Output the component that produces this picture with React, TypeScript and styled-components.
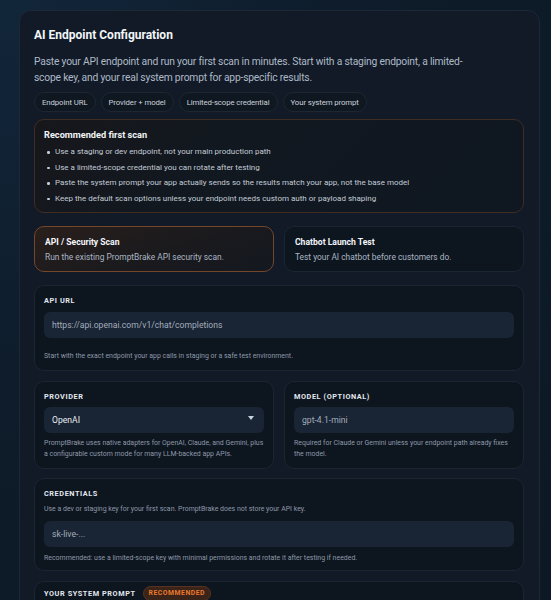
import React from "react";
import styled, { createGlobalStyle } from "styled-components";

const Global = createGlobalStyle`
  html, body { margin: 0; padding: 0; }
  body {
    background: radial-gradient(ellipse at 0% 0%, #12263a 0%, #0e1c2b 45%, #0c1824 100%);
    min-height: 600px;
    font-family: Roboto, "Liberation Sans", sans-serif;
    -webkit-font-smoothing: antialiased;
  }
`;

const Page = styled.div`
  padding: 10px 11px 0 19px;
  height: 600px;
  overflow: hidden;
  box-sizing: border-box;
`;

const Card = styled.section`
  background: #111a26;
  border: 1px solid #1d2835;
  border-radius: 12px;
  padding: 15px 15px 20px 14px;
  display: flex;
  flex-direction: column;
`;

const Title = styled.h1`
  margin: 0;
  font-size: 12px;
  line-height: 18px;
  font-weight: 700;
  color: #f3f6fa;
`;

const Desc = styled.p`
  margin: 10px 0 0;
  max-width: 440px;
  font-size: 10.3px;
  letter-spacing: -0.2px;
  line-height: 16px;
  color: #aeb9c7;
`;

const Chips = styled.div`
  display: flex;
  gap: 5px;
  margin-top: 6px;
`;

const Chip = styled.span`
  height: 18px;
  padding: 0 7px;
  display: inline-flex;
  align-items: center;
  border: 1px solid #1d2734;
  background: #0f1721;
  border-radius: 999px;
  font-size: 7.8px;
  letter-spacing: -0.1px;
  color: #c9d1da;
`;

const RecBox = styled.div`
  margin-top: 7px;
  border: 1px solid #402d22;
  border-radius: 10px;
  background: linear-gradient(135deg, #17171b 0%, #111820 40%, #0f1721 100%);
  padding: 8px 12px 6px 9px;
`;

const RecTitle = styled.div`
  font-size: 9.2px;
  line-height: 14px;
  font-weight: 700;
  color: #f1f4f8;
  margin-bottom: 2px;
`;

const Bullets = styled.ul`
  list-style: none;
  margin: 0;
  padding: 0;
`;

const Bullet = styled.li`
  position: relative;
  padding-left: 11px;
  font-size: 8px;
  line-height: 15.5px;
  color: #c3ccd7;
  &::before {
    content: "";
    position: absolute;
    left: 3px;
    top: 7px;
    width: 2.5px;
    height: 2.5px;
    border-radius: 50%;
    background: #c3ccd7;
  }
`;

const ModeRow = styled.div`
  display: grid;
  grid-template-columns: 1fr 1fr;
  gap: 10px;
  margin-top: 13px;
`;

const ModeCard = styled.div<{ $active?: boolean }>`
  border: 1px solid ${(p) => (p.$active ? "#74462a" : "#1b2633")};
  border-radius: 10px;
  background: ${(p) =>
    p.$active
      ? "linear-gradient(160deg, #2a1f1c 0%, #1b1a1d 50%, #141820 100%)"
      : "#0d151f"};
  padding: 9px 10px 7px;
`;

const ModeTitle = styled.div`
  font-size: 8.6px;
  line-height: 13px;
  font-weight: 700;
  color: #f3f6fa;
`;

const ModeSub = styled.div`
  margin-top: 1px;
  font-size: 8.4px;
  line-height: 14px;
  color: #aab5c2;
`;

const Panel = styled.div<{ $mt?: number; $pt?: number; $pb?: number }>`
  margin-top: ${(p) => p.$mt ?? 11}px;
  border: 1px solid #1b2633;
  border-radius: 10px;
  background: #0d151f;
  padding: ${(p) => p.$pt ?? 9}px 9px ${(p) => p.$pb ?? 8}px;
  display: flex;
  flex-direction: column;
`;

const Label = styled.div`
  display: flex;
  align-items: center;
  gap: 7px;
  font-size: 7.3px;
  line-height: 11px;
  font-weight: 700;
  letter-spacing: 0.08em;
  text-transform: uppercase;
  color: #e4e9ef;
`;

const Badge = styled.span`
  display: inline-flex;
  align-items: center;
  height: 13px;
  padding: 0 5px;
  border-radius: 999px;
  background: #3a2419;
  border: 1px solid #5a3320;
  color: #ee7a2c;
  font-size: 6.8px;
  letter-spacing: 0.08em;
`;

const Input = styled.div<{ $mt?: number }>`
  margin-top: ${(p) => p.$mt ?? 6}px;
  height: 26px;
  border-radius: 6px;
  background: #192434;
  display: flex;
  align-items: center;
  padding: 0 8px;
  font-size: 8.6px;
  color: #a3aebb;
`;

const SelectBox = styled(Input)`
  color: #e8edf3;
  justify-content: space-between;
  padding-right: 10px;
`;

const TextArea = styled.div`
  margin-top: 8px;
  height: 80px;
  border-radius: 6px;
  background: #192434;
`;

const Caret = styled.span`
  width: 0;
  height: 0;
  border-left: 3.5px solid transparent;
  border-right: 3.5px solid transparent;
  border-top: 4px solid #c9d2dc;
  margin-top: -4px;
`;

const Help = styled.div<{ $mt?: number }>`
  margin-top: ${(p) => p.$mt ?? 5}px;
  font-size: 6.95px;
  line-height: 11px;
  color: #8d99a8;
`;

const TwoCol = styled.div`
  display: grid;
  grid-template-columns: 1fr 1fr;
  gap: 10px;
  margin-top: 10px;
  & > ${Panel} {
    margin-top: 0;
  }
`;

export default function App() {
  return (
    <>
      <Global />
      <Page>
        <Card>
          <Title>AI Endpoint Configuration</Title>
          <Desc>
            Paste your API endpoint and run your first scan in minutes. Start with a staging
            endpoint, a limited-scope key, and your real system prompt for app-specific results.
          </Desc>
          <Chips>
            <Chip>Endpoint URL</Chip>
            <Chip>Provider + model</Chip>
            <Chip>Limited-scope credential</Chip>
            <Chip>Your system prompt</Chip>
          </Chips>

          <RecBox>
            <RecTitle>Recommended first scan</RecTitle>
            <Bullets>
              <Bullet>Use a staging or dev endpoint, not your main production path</Bullet>
              <Bullet>Use a limited-scope credential you can rotate after testing</Bullet>
              <Bullet>
                Paste the system prompt your app actually sends so the results match your app, not
                the base model
              </Bullet>
              <Bullet>
                Keep the default scan options unless your endpoint needs custom auth or payload
                shaping
              </Bullet>
            </Bullets>
          </RecBox>

          <ModeRow>
            <ModeCard $active>
              <ModeTitle>API / Security Scan</ModeTitle>
              <ModeSub>Run the existing PromptBrake API security scan.</ModeSub>
            </ModeCard>
            <ModeCard>
              <ModeTitle>Chatbot Launch Test</ModeTitle>
              <ModeSub>Test your AI chatbot before customers do.</ModeSub>
            </ModeCard>
          </ModeRow>

          <Panel $mt={13}>
            <Label>API URL</Label>
            <Input>https://api.openai.com/v1/chat/completions</Input>
            <Help $mt={13}>
              Start with the exact endpoint your app calls in staging or a safe test environment.
            </Help>
          </Panel>

          <TwoCol>
            <Panel>
              <Label>Provider</Label>
              <SelectBox $mt={5}>
                OpenAI
                <Caret />
              </SelectBox>
              <Help>
                PromptBrake uses native adapters for OpenAI, Claude, and Gemini, plus a configurable
                custom mode for many LLM-backed app APIs.
              </Help>
            </Panel>
            <Panel>
              <Label>Model (optional)</Label>
              <Input $mt={5}>gpt-4.1-mini</Input>
              <Help>Required for Claude or Gemini unless your endpoint path already fixes the model.</Help>
            </Panel>
          </TwoCol>

          <Panel $mt={9} $pb={6}>
            <Label>Credentials</Label>
            <Help $mt={5}>
              Use a dev or staging key for your first scan. PromptBrake does not store your API key.
            </Help>
            <Input $mt={6}>sk-live-...</Input>
            <Help $mt={6}>
              Recommended: use a limited-scope key with minimal permissions and rotate it after
              testing if needed.
            </Help>
          </Panel>

          <Panel $mt={10} $pt={4}>
            <Label>
              Your system prompt <Badge>RECOMMENDED</Badge>
            </Label>
            <TextArea />
          </Panel>
        </Card>
      </Page>
    </>
  );
}
